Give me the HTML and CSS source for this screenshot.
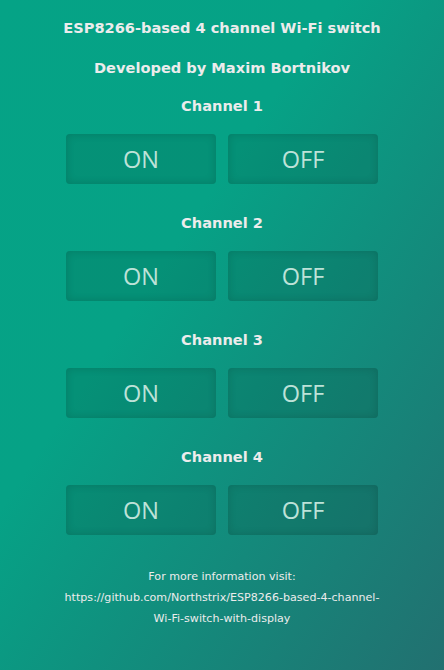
FILE: index.html
```html
<!DOCTYPE html>
<html>
<head>
<meta charset="utf-8">
<link rel="stylesheet" href="styles.css">
</head>
<body>
<div class="page">
  <h1 class="title">ESP8266-based 4 channel Wi-Fi switch</h1>
  <h2 class="author">Developed by Maxim Bortnikov</h2>
  <section class="channel">
    <h3 class="ch-name">Channel 1</h3>
    <div class="btns"><button class="btn">ON</button><button class="btn">OFF</button></div>
  </section>
  <section class="channel">
    <h3 class="ch-name">Channel 2</h3>
    <div class="btns"><button class="btn">ON</button><button class="btn">OFF</button></div>
  </section>
  <section class="channel">
    <h3 class="ch-name">Channel 3</h3>
    <div class="btns"><button class="btn">ON</button><button class="btn">OFF</button></div>
  </section>
  <section class="channel">
    <h3 class="ch-name">Channel 4</h3>
    <div class="btns"><button class="btn">ON</button><button class="btn">OFF</button></div>
  </section>
  <footer class="foot">
    <p>For more information visit:</p>
    <p>https://github.com/Northstrix/ESP8266-based-4-channel-<br>Wi-Fi-switch-with-display</p>
  </footer>
</div>
</body>
</html>
```
FILE: styles.css
```css
html, body {
  margin: 0;
  padding: 0;
  height: 100%;
}
body {
  background: linear-gradient(to bottom right, #05a386 0%, #06a286 38%, #227070 100%);
  font-family: "DejaVu Sans", Verdana, sans-serif;
  color: #ececec;
  overflow: hidden;
}
.page {
  display: flex;
  flex-direction: column;
  align-items: center;
  padding-top: 19px;
}
.title, .author, .ch-name {
  margin: 0;
  font-weight: bold;
  font-size: 14.6px;
  line-height: 18px;
}
.author {
  margin-top: 22px;
}
.channel {
  display: flex;
  flex-direction: column;
  align-items: center;
}
.ch-name { margin-top: 30px; }
.channel:first-of-type .ch-name { margin-top: 20px; }
.btns {
  display: flex;
  gap: 12px;
  margin-top: 19px;
}
.btn {
  width: 150px;
  height: 50px;
  border: none;
  border-radius: 4px;
  background: rgba(0, 45, 30, 0.14);
  box-shadow: inset 0 0 8px rgba(0, 30, 20, 0.18);
  color: #bde2d8;
  font-family: "Open Sans", "DejaVu Sans", sans-serif;
  font-size: 23.5px;
  padding: 0;
}
.foot {
  margin-top: 31px;
  text-align: center;
  font-size: 11.1px;
  line-height: 21px;
}
.foot p { margin: 0; }
```
